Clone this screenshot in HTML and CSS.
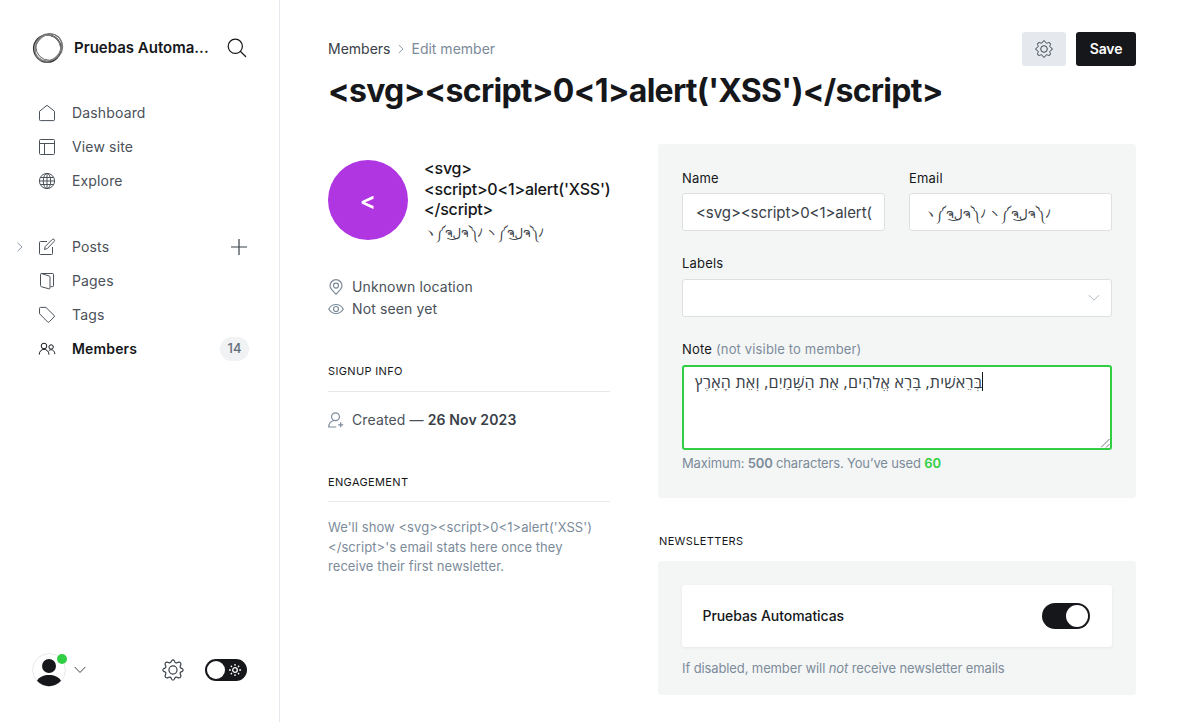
FILE: index.html
```html
<!DOCTYPE html>
<html lang="en">
<head>
<meta charset="utf-8">
<title>Edit member</title>
<link rel="stylesheet" href="styles.css">
</head>
<body>
<svg class="defs" width="0" height="0" aria-hidden="true">
  <symbol id="gear" viewBox="0 0 24 24">
    <path d="M10.1 2.7 L10.5 1.9 Q12 -.1 13.5 1.9 L14 3.2 Q14.8 4.8 16.5 4.1 L18 3.4 Q20.8 3.2 20.6 6 L19.9 7.5 Q19.2 9.2 20.8 10 L22.1 10.5 Q24.1 12 22.1 13.5 L20.8 14 Q19.2 14.8 19.9 16.5 L20.6 18 Q20.8 20.8 18 20.6 L16.5 19.9 Q14.8 19.2 14 20.8 L13.5 22.1 Q12 24.1 10.5 22.1 L10 20.8 Q9.2 19.2 7.5 19.9 L6 20.6 Q3.2 20.8 3.4 18 L4.1 16.5 Q4.8 14.8 3.2 14 L1.9 13.5 Q-.1 12 1.9 10.5 L3.2 10 Q4.8 9.2 4.1 7.5 L3.4 6 Q3.2 3.2 6 3.4 L7.5 4.1 Q9.2 4.8 10.1 2.7Z"/>
    <circle cx="12" cy="12" r="4.4"/>
  </symbol>
</svg>
<div class="app">
  <nav class="sidebar">
    <header class="site">
      <svg class="site-logo" width="32" height="32" viewBox="0 0 32 32">
        <circle cx="15.3" cy="16.5" r="13.6" stroke="#333" stroke-width="1.5"/>
        <ellipse cx="17.3" cy="14.900" rx="13.4" ry="13.4" stroke="#666" stroke-width="1"/>
        <ellipse cx="16.4" cy="15.7" rx="12" ry="14.800" stroke="#777" stroke-width="1.2" transform="rotate(42 16.4 15.7)"/>
        <circle cx="15.6" cy="16" r="13" stroke="#888" stroke-width=".9"/>
      </svg>
      <span class="site-name">Pruebas Automa...</span>
      <svg class="search" width="20" height="20" viewBox="0 0 20 20"><circle cx="8.3" cy="8.3" r="7.1"/><path d="M13.3 13.3 18.6 18.5"/></svg>
    </header>
    <ul class="menu">
      <li><svg class="ico" width="18" height="18" viewBox="0 0 18 18"><path d="M1.5 7.3 9 1.3l7.5 6v8.4q0 .9-.9.9H2.4q-.9 0-.9-.9Z"/></svg><span>Dashboard</span></li>
      <li><svg class="ico" width="18" height="18" viewBox="0 0 18 18"><rect x="1.5" y="1.5" width="15" height="15" rx="1"/><path d="M1.5 5.5h15M6.5 5.5v11"/></svg><span>View site</span></li>
      <li><svg class="ico" width="18" height="18" viewBox="0 0 18 18"><circle cx="9" cy="9" r="7.6"/><ellipse cx="9" cy="9" rx="3.7" ry="7.6"/><path d="M1.4 9h15.2M2.6 5.5h12.8M2.6 12.5h12.8M9 1.4v15.2"/></svg><span>Explore</span></li>
    </ul>
    <ul class="menu">
      <li><svg class="expand" width="8" height="10" viewBox="0 0 8 10"><path d="M1.5.8 6 5 1.5 9.2"/></svg><svg class="ico" width="18" height="18" viewBox="0 0 18 18"><path d="M9 3.5H2.4q-.9 0-.9.9v11.2q0 .9.9.9h11.2q.9 0 .9-.9V9M6.5 11.5l.7-3 7-7q1-.9 2 0 .8 1-.1 1.9l-6.7 7.1Z"/></svg><span>Posts</span><svg class="add" width="18" height="18" viewBox="0 0 18 18"><path d="M9 1v16M1 9h16"/></svg></li>
      <li><svg class="ico" width="18" height="18" viewBox="0 0 18 18"><path d="M3.2 1.5h11.5q.8 0 .8.8v11.4q0 .9-.9.9h-2M3.2 1.5q-.7.1-.7.9v11.2q0 .9.8 1.1l7.6 2.1q1.1.2 1.1-.8V5q0-.8-.8-1Z"/></svg><span>Pages</span></li>
      <li><svg class="ico" width="18" height="18" viewBox="0 0 18 18"><path d="M1.5 2.3q0-.9.9-.9H7.9l8.2 8q.8.8 0 1.6l-4.9 4.9q-.8.8-1.6 0L1.5 7.7Z"/></svg><span>Tags</span></li>
      <li class="active"><svg class="ico" width="18" height="18" viewBox="0 0 18 18"><circle cx="6" cy="6" r="2.8"/><circle cx="13.1" cy="7" r="2.2"/><path d="M1.2 14.6c.2-7 9.6-7 9.8 0M10.8 10.9c2-2.5 5.9-.9 6 3.2"/></svg><span>Members</span><b class="count">14</b></li>
    </ul>
    <footer class="account">
      <span class="user"><svg width="34" height="34" viewBox="0 0 34 34"><circle cx="17" cy="17" r="16.4" fill="#fff" stroke="#e5e9ed"/><circle cx="17" cy="13" r="7" fill="#15171a"/><path d="M5 27.8C9 20 25 20 29 27.8 23 35 11 35 5 27.8Z" fill="#15171a"/></svg><i class="online"></i></span>
      <svg class="chev" width="12" height="8" viewBox="0 0 12 8"><path d="M.7 1 6 6.5 11.3 1"/></svg>
      <svg class="gear" width="22" height="22"><use href="#gear"/></svg>
      <span class="night"><i></i><svg width="12" height="12" viewBox="0 0 12 12"><circle cx="6" cy="6" r="2.3"/><path d="M6 0v1.8M6 10.2V12M0 6h1.8M10.2 6H12M1.8 1.8 3 3M9 9l1.2 1.2M10.2 1.8 9 3M3 9l-1.2 1.2"/></svg></span>
    </footer>
  </nav>
  <main class="main">
    <header class="top">
      <div class="crumbs"><span>Members</span><svg width="6" height="10" viewBox="0 0 6 10"><path d="M.8 1 5 5 .8 9"/></svg><span class="current">Edit member</span></div>
      <div class="actions"><button class="btn-gear"><svg class="gear" width="18" height="18"><use href="#gear"/></svg></button><button class="btn-save">Save</button></div>
    </header>
    <h1>&lt;svg&gt;&lt;script&gt;0&lt;1&gt;alert('XSS')&lt;/script&gt;</h1>
    <div class="columns">
      <aside class="details">
        <div class="profile">
          <span class="avatar">&lt;</span>
          <div><h3>&lt;svg&gt;<br>&lt;script&gt;0&lt;1&gt;alert('XSS')<br>&lt;/script&gt;</h3><p class="mail">ヽ༼ຈل͜ຈ༽ﾉ ヽ༼ຈل͜ຈ༽ﾉ</p></div>
        </div>
        <p class="fact location"><svg width="16" height="16" viewBox="0 0 16 16"><path d="M8 15.2C5.500 12.500 2 9.700 2 6.700a6 6 0 0 1 12 0c0 3-3.500 5.800-6 8.500Z"/><circle cx="8" cy="6.600" r="2.500"/></svg><span>Unknown location</span></p>
        <p class="fact"><svg width="16" height="16" viewBox="0 0 16 16"><path d="M.8 8C4 2 12 2 15.200 8 12 14 4 14 .8 8Z"/><circle cx="8" cy="8" r="2.500"/></svg><span>Not seen yet</span></p>
        <h4 class="signup">Signup info</h4>
        <p class="fact created"><svg width="16" height="16" viewBox="0 0 16 16"><circle cx="7.500" cy="4.700" r="3.900"/><path d="M5.700 8.500C2.300 9.400.8 11.500.8 15h7.500M12.700 10.300v5M10.200 12.800h5"/></svg><span>Created — <b>26 Nov 2023</b></span></p>
        <h4 class="engagement">Engagement</h4>
        <p class="hint">We'll show &lt;svg&gt;&lt;script&gt;0&lt;1&gt;alert('XSS')<br>&lt;/script&gt;'s email stats here once they<br>receive their first newsletter.</p>
      </aside>
      <section class="forms">
        <div class="panel form">
          <div class="pair">
            <div><label>Name</label><div class="input"><span class="clip">&lt;svg&gt;&lt;script&gt;0&lt;1&gt;alert(</span></div></div>
            <div><label>Email</label><div class="input"><span class="mail">ヽ༼ຈل͜ຈ༽ﾉ ヽ༼ຈل͜ຈ༽ﾉ</span></div></div>
          </div>
          <label>Labels</label>
          <div class="input select"><svg width="12" height="8" viewBox="0 0 12 8"><path d="M1 1.200 6 6.200 11 1.200"/></svg></div>
          <label>Note <span class="muted">(not visible to member)</span></label>
          <div class="note"><span class="hebrew">בְּרֵאשִׁית, בָּרָא אֱלֹהִים, אֵת הַשָּׁמַיִם, וְאֵת הָאָרֶץ</span><i class="caret"></i><svg class="grip" width="9" height="9" viewBox="0 0 9 9"><path d="M0 8.500 8.500 0M5 8.500 8.500 5"/></svg></div>
          <p class="help">Maximum: <b>500</b> characters. You’ve used <b class="used">60</b></p>
        </div>
        <h4 class="news">Newsletters</h4>
        <div class="panel letters">
          <div class="card"><span>Pruebas Automaticas</span><i class="toggle"></i></div>
          <p class="disabled">If disabled, member will <em>not</em> receive newsletter emails</p>
        </div>
      </section>
    </div>
  </main>
</div>
</body>
</html>
```
FILE: styles.css
```css
* { box-sizing: border-box; }
body { margin: 0; font-family: Inter, "Noto Sans", "Open Sans", "DejaVu Sans", sans-serif; font-size: 14px; color: #15171a; background: #fff; letter-spacing: .15px; }
h1, h3, h4, p, ul { margin: 0; padding: 0; }
svg { fill: none; flex: none; display: block; }
.defs { position: absolute; }
.app { display: flex; width: 1184px; height: 722px; overflow: hidden; }

.sidebar { width: 280px; flex: none; border-right: 1px solid #e5e9ed; padding: 32px 32px 0; display: flex; flex-direction: column; }
.site { height: 32px; display: flex; align-items: center; margin-bottom: 32px; }
.site-name { width: 136px; margin: 0 17px 0 10px; padding-bottom: 2px; font-size: 15px; font-weight: 600; letter-spacing: 0; white-space: nowrap; }
.search { stroke: #15171a; stroke-width: 1.2; stroke-linecap: round; }
.menu { list-style: none; margin-bottom: 32px; }
.menu li { height: 34px; display: flex; align-items: center; padding-left: 6px; color: #4a5159; font-size: 14px; position: relative; }
.menu li > span { padding-bottom: 1px; }
.ico { stroke: #4a5159; stroke-width: 1; margin-right: 16px; }
.menu .active { color: #15171a; font-weight: 600; }
.active .ico { stroke: #15171a; }
.expand { position: absolute; left: -16px; top: 12px; stroke: #8e9cac; }
.add { margin: 0 -1px 0 auto; stroke: #394047; stroke-width: 1.200; }
.count { margin: 0 -2px 0 auto; width: 29px; height: 24px; border-radius: 12px; background: #f0f2f4; color: #626d79; font-size: 13px; font-weight: 500; line-height: 23px; text-align: center; }
.account { display: flex; align-items: center; margin-top: auto; margin-bottom: 35px; height: 34px; }
.user { position: relative; }
.online { position: absolute; width: 10px; height: 10px; border-radius: 50%; background: #30cf43; left: 25px; top: 1px; }
.chev { stroke: #394047; margin: 0 76px 0 8px; }
.gear { stroke: #394047; stroke-width: 1.300; }
.night { width: 42px; height: 22px; border-radius: 11px; background: #15171a; margin-left: 21px; display: flex; align-items: center; padding-left: 2px; gap: 4px; }
.night i { width: 18px; height: 18px; background: #fff; border-radius: 50%; }
.night svg { stroke: #fff; stroke-width: 1.300; }

.main { width: 856px; padding: 32px 0 0 48px; }
.top { display: flex; justify-content: space-between; height: 34px; }
.crumbs { display: flex; align-items: center; gap: 7.500px; color: #394047; letter-spacing: 0; }
.crumbs span { padding-bottom: 1px; }
.crumbs svg { stroke: #8e9cac; }
.crumbs .current { color: #7c8b9a; }
.actions { display: flex; gap: 10px; }
.actions button { border: 0; border-radius: 3px; height: 34px; padding: 0 0 1px; font: 600 14px Inter, sans-serif; letter-spacing: -.1px; }
.actions .btn-gear { width: 44px; background: #e5e9ed; display: flex; align-items: center; justify-content: center; padding: 0; }
.actions .btn-save { width: 60px; background: #15171a; color: #fff; }
h1 { font-size: 32px; line-height: 40px; font-weight: 700; letter-spacing: -.72px; margin-top: 5px; white-space: nowrap; }
.columns { display: grid; grid-template-columns: 282px 478px; gap: 48px; margin-top: 33px; }

.profile { display: flex; gap: 16px; padding-top: 16px; height: 132px; }
.avatar { width: 80px; height: 80px; flex: none; border-radius: 50%; background: #b036e2; color: #fff; font-size: 24px; font-weight: 600; line-height: 82px; text-align: center; }
h3 { font-size: 16px; line-height: 20.500px; font-weight: 500; letter-spacing: -.2px; white-space: nowrap; margin-top: -2px; }
.mail { white-space: nowrap; letter-spacing: 0; color: #394047; }
.profile .mail { font-size: 11.900px; line-height: 24px; padding: 1px 0 0; }
.input .mail { font-size: 12.400px; line-height: 20px; padding: 3px 0 0 1px; }
.fact { display: flex; align-items: center; gap: 8px; height: 22px; color: #4a5159; font-size: 14px; letter-spacing: .12px; }
.fact span { padding-bottom: 1px; }
.fact svg { stroke: #7c8b9a; stroke-width: 1.200; }
.fact b { font-weight: 600; color: #394047; }
h4 { font-size: 11px; line-height: 16px; font-weight: 400; letter-spacing: .35px; text-transform: uppercase; }
.signup, .engagement { border-bottom: 1px solid #e6e9eb; height: 29px; }
.signup { margin-top: 43px; }
.created { margin-top: 17px; }
.engagement { margin-top: 43px; height: 28px; }
.hint { font-size: 13px; line-height: 19.500px; color: #7c8b9a; margin-top: 16px; white-space: nowrap; letter-spacing: .06px; }

.panel { background: #f4f6f6; border-radius: 3px; padding: 24px; }
.form { height: 354px; }
.pair { display: grid; grid-template-columns: 203px 203px; gap: 24px; margin-bottom: 22px; }
label { display: block; font-size: 13px; line-height: 20px; height: 25px; font-weight: 400; letter-spacing: .2px; color: #15171a; }
.input { height: 38px; background: #fff; border: 1px solid #dddfe1; border-radius: 3px; padding: 0 12px 0 13px; font-size: 15px; color: #394047; display: flex; align-items: center; }
.clip { white-space: nowrap; line-height: 24px; letter-spacing: -.07px; padding-top: 1px; }
.select { justify-content: flex-end; padding-right: 11px; margin: 1px 0 22px; }
.select svg { stroke: #aeb7c1; }
.muted { color: #7c8b9a; letter-spacing: .15px; }
.note { height: 85px; margin-top: 1px; background: #fff; border: 2px solid #30cf43; border-radius: 3px; padding: 5px 11px; display: flex; align-items: flex-start; position: relative; }
.hebrew { font-family: "Open Sans", "Liberation Sans", sans-serif; font-size: 16px; line-height: 21px; letter-spacing: .23px; color: #394047; white-space: nowrap; }
.caret { width: 1px; height: 19px; background: #15171a; }
.grip { position: absolute; right: 0; bottom: 0; stroke: #555; stroke-width: .8; }
.help { font-size: 13px; line-height: 20px; color: #7c8b9a; margin-top: 3px; letter-spacing: -.16px; }
.help b { font-weight: 600; }
.help .used { color: #30cf43; }
.news { margin: 35px 0 12px 1px; }
.letters { height: 134px; }
.card { height: 62px; background: #fff; border-radius: 3px; box-shadow: 0 1px 3px rgba(0,0,0,.06); padding: 0 22px 0 20.500px; display: flex; align-items: center; justify-content: space-between; font-weight: 500; letter-spacing: -.07px; }
.card span { padding-bottom: 1px; }
.toggle { width: 48px; height: 26px; border-radius: 13px; background: #15171a; display: flex; justify-content: flex-end; padding: 2px; }
.toggle::after { content: ""; width: 22px; height: 22px; border-radius: 50%; background: #fff; }
.disabled { font-size: 13px; line-height: 20px; color: #7c8b9a; margin-top: 11px; letter-spacing: -.11px; }
```
